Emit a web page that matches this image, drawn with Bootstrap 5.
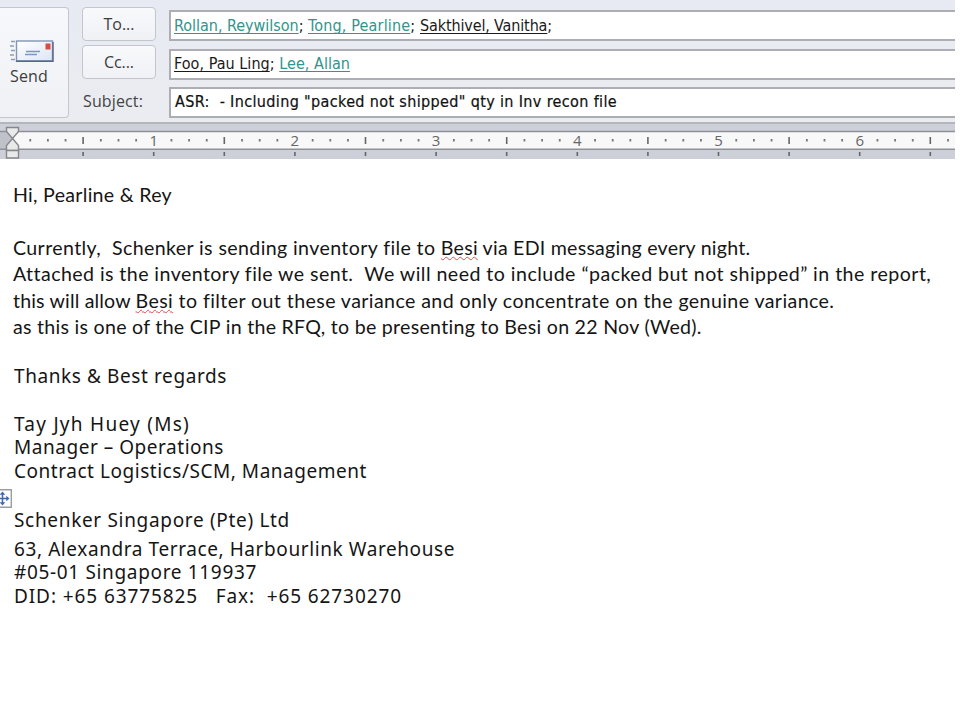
<!DOCTYPE html>
<html lang="en">
<head>
<meta charset="utf-8">
<title>Message</title>
<link href="https://cdn.jsdelivr.net/npm/bootstrap@5.3.0/dist/css/bootstrap.min.css" rel="stylesheet">
<style>
body{width:960px;height:720px;overflow:hidden;background:#fff;color:#151515}
.composer{width:955px}
.head-pane{height:122px;background:linear-gradient(#e7eaf2,#eaecf0);padding-top:7px}
.send-btn{width:69px;height:111px;border:1.5px solid #c3c6cc;border-left:0;border-radius:0 4px 4px 0;background:linear-gradient(#f7f8fb,#f0f1f5);font:16px/20px "Open Sans",sans-serif;color:#3c3c3c;padding:31px 0 0 10px}
.send-btn svg{margin-bottom:3px}
.labels{width:74px;margin-left:13px}
.pick{height:34px;border:1.5px solid #c3c6cc;border-radius:4px;background:linear-gradient(#f8f9fb,#f0f1f5);font:16px/33px "Open Sans",sans-serif;color:#3c3c3c;padding:0;margin-bottom:4px}
.subject-label{font:16px/37px "Open Sans",sans-serif;color:#444;height:36px;padding-left:1px}
.fields{margin-left:13px;padding-top:3px}
.entry{height:31px;border:2px solid #acaeb3;border-right:0;background:#fff;margin-bottom:7.5px;padding-left:3px;font:16px/27px "DejaVu Sans Condensed","DejaVu Sans",sans-serif;font-stretch:condensed;color:#1a1a1a;white-space:pre}
.entry.cc{line-height:26px}
.entry u{text-decoration-thickness:1px;text-underline-offset:2px;text-decoration-skip-ink:none}
.teal{color:#30958c}
.subj{color:#111;padding-left:4px;line-height:26px;-webkit-text-stroke:.2px #111}
.ruler{height:37px;display:block}
.ruler text{font:15px "Open Sans",sans-serif;fill:#666;text-anchor:middle}
.message{padding:22.5px 0 0 13px;font-family:Lato,sans-serif;font-size:19.6px;position:relative}
.ln{white-space:pre;height:26.6px;line-height:26.6px}
.sig{font-family:"Noto Sans",sans-serif;font-size:19px;padding-top:24.3px;padding-left:1px}
.sig .ln{height:23.6px;line-height:23.6px}
.typo{text-decoration:underline wavy #e8484c 1px;text-underline-offset:1px;text-decoration-skip-ink:none}
.gap-company{margin-top:26px}
.gap-address{margin-top:4.9px}
.handle{position:absolute;left:0;top:330px}
</style>
<script src="https://cdn.jsdelivr.net/npm/bootstrap@5.3.0/dist/js/bootstrap.bundle.min.js"></script>
</head>
<body>
<main class="composer">
  <header class="head-pane d-flex align-items-start">
    <button class="send-btn d-flex flex-column align-items-start flex-shrink-0">
      <svg width="44" height="24" viewBox="0 0 44 24">
        <defs><linearGradient id="env" x2="1" y2="1"><stop offset="0" stop-color="#fff"/><stop offset="1" stop-color="#dbe6f5"/></linearGradient></defs>
        <path d="M1 2.500h4M0 7h4M1 11.500h4M0 16h4M1 20.500h4" stroke="#8a9cb8" stroke-width="1.300"/>
        <rect x="6.500" y="2" width="36" height="20" fill="url(#env)" stroke="#8295b5" stroke-width="1.400"/>
        <path d="M6 22.300h37V3" fill="none" stroke="#56688a" stroke-width="1.400"/>
        <rect x="35.500" y="4.500" width="5" height="6" fill="#d84a42"/>
        <path d="M16 12.500h14M15 15.500h12" stroke="#7d96bd" stroke-width="1.400"/>
      </svg>
      <span data-w="38">Send</span>
    </button>
    <div class="labels d-flex flex-column">
      <button class="pick"><span data-w="31">To...</span></button>
      <button class="pick"><span data-w="30">Cc...</span></button>
      <div class="subject-label"><span data-w="60">Subject:</span></div>
    </div>
    <div class="fields flex-grow-1">
      <div class="entry"><span data-w="134"><u class="teal">Rollan, Reywilson</u>; </span><span data-w="112"><u class="teal">Tong, Pearline</u>; </span><span data-w="132"><u>Sakthivel, Vanitha</u>;</span></div>
      <div class="entry cc"><span data-w="176"><u>Foo, Pau Ling</u>; <u class="teal">Lee, Allan</u></span></div>
      <div class="entry subj"><span data-w="442">ASR:  - Including "packed not shipped" qty in Inv recon file</span></div>
    </div>
  </header>
  <svg class="ruler" id="ruler" width="955" height="37" viewBox="0 0 955 37">
    <rect width="955" height="37" fill="#cdd0d8"/>
    <rect width="955" height="2" fill="#b3b7bd"/>
    <rect x="12" y="10" width="943" height="17" fill="#f8f8f9"/>
    <rect y="10" width="12" height="17" fill="#bfc3c9"/>
    <path d="M0 9.500h955M0 27.200h955" stroke="#8e9197" stroke-width="1.600"/>
    <g id="marks"></g>
    <g fill="#e9e9ea" stroke="#85878b" stroke-width="1.400">
      <path d="M6.500 5.500h12v4l-6 7-6-7z"/>
      <path d="M12.500 16.500l6 7v5h-12v-5z"/>
      <path d="M6.500 28.500h12v7.500h-12z"/>
    </g>
  </svg>
  <section class="message">
    <div class="ln"><span data-w="159">Hi, Pearline &amp; Rey</span></div>
    <div class="ln"></div>
    <div class="ln"><span data-w="427.5">Currently,  Schenker is sending inventory file to </span><span data-w="309.5"><span class="typo">Besi</span> via EDI messaging every night.</span></div>
    <div class="ln"><span data-w="350">Attached is the inventory file we sent.  </span><span data-w="567">We will need to include “packed but not shipped” in the report,</span></div>
    <div class="ln"><span data-w="122.5">this will allow </span><span data-w="698.5"><span class="typo">Besi</span> to filter out these variance and only concentrate on the genuine variance.</span></div>
    <div class="ln"><span data-w="689">as this is one of the CIP in the RFQ, to be presenting to Besi on 22 Nov (Wed).</span></div>
    <div class="sig">
      <div class="ln"><span data-w="213">Thanks &amp; Best regards</span></div>
      <div class="ln"></div>
      <div class="ln"><span data-w="176">Tay Jyh Huey (Ms)</span></div>
      <div class="ln"><span data-w="210">Manager – Operations</span></div>
      <div class="ln"><span data-w="353">Contract Logistics/SCM, Management</span></div>
      <div class="ln gap-company"><span data-w="276">Schenker Singapore (Pte) Ltd</span></div>
      <div class="ln gap-address"><span data-w="441">63, Alexandra Terrace, Harbourlink Warehouse</span></div>
      <div class="ln"><span data-w="243">#05-01 Singapore 119937</span></div>
      <div class="ln"><span data-w="388">DID: +65 63775825   Fax:  +65 62730270</span></div>
    </div>
    <svg class="handle" width="12" height="19" viewBox="0 0 12 19">
      <path d="M0 .7h11.300v17.600H0" fill="#fff" stroke="#9a9da3" stroke-width="1.400"/>
      <path d="M2.500 4v11M0 9.500h8" stroke="#4267b2" stroke-width="1.500"/>
      <path d="M2.500 2.500l2.800 3.200h-5.600zM2.500 16.500l2.800-3.200h-5.600zM9.500 9.500l-3.200-2.800v5.600z" fill="#4267b2"/>
    </svg>
  </section>
</main>
<script>
// Ruler: eight divisions per inch, numbered at whole inches
var inch = 141.2, out = '';
for (var i = 1; 12.5 + i * inch / 8 < 953; i++) {
  var x = 12.5 + i * inch / 8;
  if (i % 8 === 0) out += '<text x="' + x + '" y="24">' + i / 8 + '</text>';
  else if (i % 4 === 0) out += '<path d="M' + x + ' 15v7" stroke="#666" stroke-width="1.600"/>';
  else out += '<rect x="' + (x - 0.8) + '" y="17" width="1.800" height="2.500" fill="#777"/>';
  if (i % 4 === 0) out += '<path d="M' + x + ' 30v4" stroke="#666" stroke-width="1.600"/>';
}
document.getElementById('marks').innerHTML = out;
// Track each line out to its measured width
document.querySelectorAll('[data-w]').forEach(function (el) {
  var w = el.getBoundingClientRect().width;
  el.style.letterSpacing = (el.dataset.w - w) / el.textContent.length + 'px';
});
</script>
</body>
</html>
